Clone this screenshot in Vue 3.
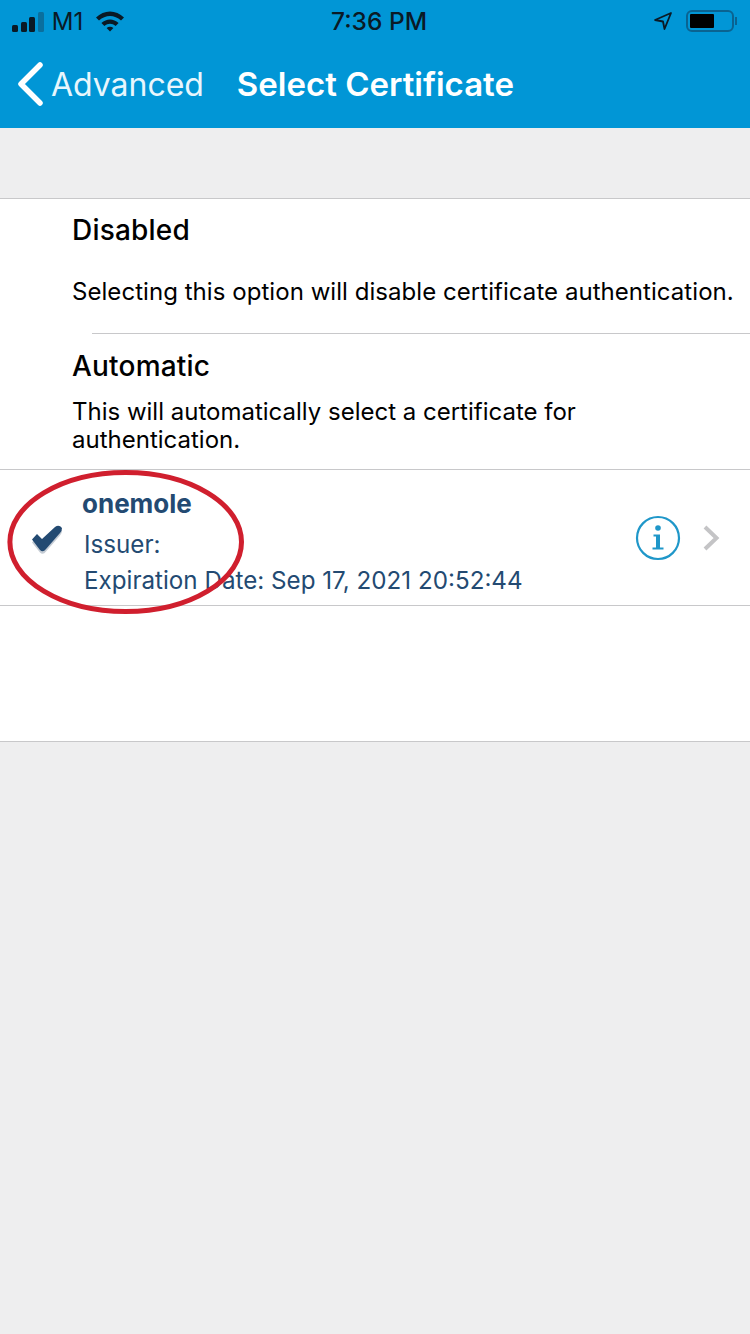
<template>
  <div class="screen">
    <header class="top">
      <div class="status">
        <div class="status-left">
          <div class="signal">
            <i class="b1"></i><i class="b2"></i><i class="b3"></i><i class="b4"></i>
          </div>
          <span class="carrier">M1</span>
          <svg class="wifi" width="30" height="22" viewBox="0 0 30 22">
            <path d="M1 7.5C9 -0.5 21 -0.5 29 7.5L26 10.6C19.5 4.6 10.5 4.6 4 10.6Z" fill="#0a1a26" />
            <path d="M6.4 13C11.5 8.2 18.5 8.2 23.6 13L20.6 16C17 13 13 13 9.4 16Z" fill="#0a1a26" />
            <path d="M11.6 18C13.6 16.4 16.4 16.4 18.4 18L15 21.6Z" fill="#0a1a26" />
          </svg>
        </div>
        <span class="clock">7:36 PM</span>
        <div class="status-right">
          <svg class="arrow" width="20" height="20" viewBox="0 0 20 20">
            <path d="M18 2L2 9L10 10.5L11.5 18Z" fill="none" stroke="#0a1a26" stroke-width="1.8" stroke-linejoin="round" />
          </svg>
          <div class="battery"><div class="charge"></div></div>
          <div class="nub"></div>
        </div>
      </div>
      <nav class="nav">
        <svg class="back" width="28" height="44" viewBox="0 0 28 44">
          <path d="M24 3L5 22L24 41" fill="none" stroke="#fff" stroke-width="5.5" stroke-linecap="round" stroke-linejoin="round" />
        </svg>
        <span class="back-label">Advanced</span>
        <span class="title">Select Certificate</span>
      </nav>
    </header>

    <section class="list">
      <div class="option first">
        <h3>Disabled</h3>
        <p>Selecting this option will disable certificate authentication.</p>
      </div>
      <div class="option second">
        <h3>Automatic</h3>
        <p>This will automatically select a certificate for authentication.</p>
      </div>
      <div class="cert">
        <svg class="check" width="34" height="32" viewBox="0 0 34 32">
          <path d="M2 19L7 13L12 18L25 6Q29 3 32 7Q32 10 30 12L16 28Q13 32 10 29Z" fill="#8c9aaa" opacity="0.5" transform="translate(0 1.5)" />
          <path d="M2 17.5L7 12L12 17L25 5Q29 2 32 6Q32 9 30 11L16 27Q13 31 10 28Z" fill="#234a72" />
        </svg>
        <div class="cert-text">
          <div class="cert-name">{{ cert.name }}</div>
          <div class="cert-line issuer">Issuer:</div>
          <div class="cert-line expiry">Expiration Date: {{ cert.expires }}</div>
        </div>
        <svg class="info" width="46" height="46" viewBox="0 0 46 46">
          <circle cx="23" cy="23" r="21" fill="none" stroke="#1f97c9" stroke-width="2.2" />
          <circle cx="23" cy="13" r="2.8" fill="#1f97c9" />
          <path d="M18.5 19.5H25V32.5H28.5V34.5H17.5V32.5H21V21.5H18.5Z" fill="#1f97c9" />
        </svg>
        <svg class="chevron" width="18" height="26" viewBox="0 0 18 26">
          <path d="M3 2L14.5 13L3 24" fill="none" stroke="#c4c4c6" stroke-width="4" />
        </svg>
      </div>
      <div class="filler"></div>
    </section>

    <svg class="ring" width="250" height="150" viewBox="0 0 250 150">
      <ellipse cx="125.7" cy="75" rx="115.8" ry="69.5" fill="none" stroke="#d01f2e" stroke-width="5" />
    </svg>
  </div>
</template>

<script setup>
const cert = {
  name: "onemole",
  expires: "Sep 17, 2021 20:52:44",
};
</script>

<style scoped>
.screen {
  position: relative;
  width: 750px;
  height: 1334px;
  background: #eeeeef;
  font-family: Inter, "Liberation Sans", sans-serif;
  overflow: hidden;
}

.top {
  height: 128px;
  background: #0196d6;
}

.status {
  height: 40px;
  box-sizing: border-box;
  padding: 2px 12px 0;
  display: flex;
  align-items: center;
  justify-content: space-between;
  position: relative;
  color: #0a1a26;
}

.status-left,
.status-right {
  display: flex;
  align-items: center;
}

.signal {
  display: flex;
  align-items: flex-end;
  gap: 2.6px;
  height: 21px;
}

.signal i {
  display: block;
  width: 6px;
  border-radius: 1.5px;
  background: #0a1a26;
}

.signal .b1 { height: 7px; }
.signal .b2 { height: 10px; }
.signal .b3 { height: 15px; }
.signal .b4 { height: 20px; background: #0a6f9e; }

.carrier {
  font-size: 24px;
  margin-left: 8px;
}

.wifi {
  margin-left: 12px;
}

.clock {
  position: absolute;
  left: 331px;
  top: 6px;
  font-size: 24.5px;
  font-weight: 500;
}

.battery {
  width: 48px;
  height: 22px;
  box-sizing: border-box;
  border: 2px solid #0a6391;
  border-radius: 6px;
  padding: 2px;
  margin-left: 13px;
}

.charge {
  width: 24px;
  height: 14px;
  background: #000;
  border-radius: 1px;
}

.nub {
  width: 2px;
  height: 8px;
  background: #0a6391;
  margin-left: 1px;
}

.status-right {
  margin-right: 1px;
}

.nav {
  height: 88px;
  display: flex;
  align-items: center;
  color: #fff;
  padding-left: 16px;
}

.back-label {
  font-size: 32px;
  margin-left: 7px;
  letter-spacing: -0.03px;
  color: #e8f6fd;
}

.title {
  font-size: 33px;
  font-weight: 600;
  margin-left: 33px;
}

.list {
  margin-top: 70px;
  background: #fff;
  border-top: 1px solid #c8c8ca;
  border-bottom: 1px solid #c8c8ca;
}

.option {
  padding-left: 72px;
  color: #000;
}

.option h3 {
  margin: 0;
  font-size: 28px;
  font-weight: 500;
  line-height: 32px;
  letter-spacing: 0.2px;
}

.option p {
  margin: 0;
  font-size: 24px;
  line-height: 28px;
}

.first {
  height: 135px;
  padding-top: 15px;
  box-sizing: border-box;
  position: relative;
}

.first p {
  margin-top: 32px;
  white-space: nowrap;
  letter-spacing: 0.05px;
}

.first::after {
  content: "";
  position: absolute;
  left: 92px;
  right: 0;
  bottom: 0;
  height: 1px;
  background: #c8c8ca;
}

.second {
  height: 136px;
  padding-top: 16px;
  padding-right: 100px;
  box-sizing: border-box;
  border-bottom: 1px solid #c8c8ca;
}

.second p {
  margin-top: 16px;
}

.cert {
  height: 136px;
  box-sizing: border-box;
  display: flex;
  align-items: center;
  border-bottom: 1px solid #c8c8ca;
  color: #234a72;
}

.check {
  margin-left: 30px;
  flex: none;
}

.cert-text {
  flex: 1;
  margin-left: 18px;
  padding-top: 9px;
  font-size: 24.2px;
}

.cert-name {
  font-size: 26px;
  font-weight: 700;
  line-height: 32px;
}

.cert-line {
  line-height: 30px;
  margin-left: 2px;
}

.issuer {
  margin-top: 10px;
}

.expiry {
  margin-top: 6px;
}

.info {
  flex: none;
}

.chevron {
  flex: none;
  margin-left: 21px;
  margin-right: 30px;
}

.filler {
  height: 135px;
}

.ring {
  position: absolute;
  left: 0;
  top: 467px;
}
</style>
